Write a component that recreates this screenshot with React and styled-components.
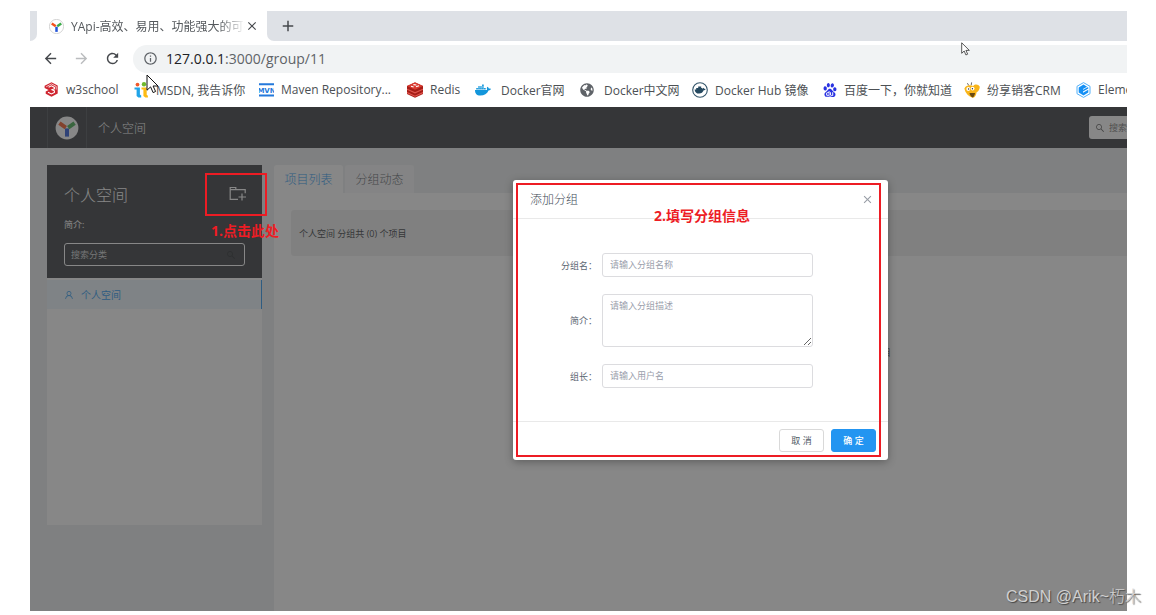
import React from 'react';
import styled, { createGlobalStyle } from 'styled-components';
import { FaDocker, FaGlobeAmericas } from 'react-icons/fa';
import { SiBaidu } from 'react-icons/si';
import { AiOutlineSearch, AiOutlineUser } from 'react-icons/ai';
import { MdArrowBack, MdArrowForward, MdRefresh, MdInfoOutline, MdClose, MdAdd } from 'react-icons/md';

const GlobalStyle = createGlobalStyle`
  * {
    box-sizing: border-box;
  }

  body {
    margin: 0;
    background: #fff;
    font-family: 'Open Sans', 'Noto Sans', 'Noto Sans CJK SC', sans-serif;
    font-size: 12px;
  }

  button,
  input,
  textarea {
    font-family: inherit;
  }
`;

const Screen = styled.div`
  position: relative;
  display: flex;
  min-height: 100vh;
  padding: 11px 29px 4px 30px;
`;

const Browser = styled.div`
  position: relative;
  display: flex;
  flex: 1;
  flex-direction: column;
  min-width: 0;
  overflow: hidden;
`;

/* ---------- browser chrome ---------- */

const TabStrip = styled.div`
  display: flex;
  flex: none;
  height: 30px;
`;

const PreviousTab = styled.div`
  width: 7px;
  background: #dee1e6;
  border-bottom-right-radius: 7px;
`;

const BrowserTab = styled.div`
  display: flex;
  align-items: center;
  width: 230px;
  padding: 0 8px 0 12px;
  color: #55595d;
`;

const TabTitle = styled.span`
  flex: 1;
  margin-left: 7px;
  overflow: hidden;
  white-space: nowrap;
  mask-image: linear-gradient(to right, #000 85%, transparent);
`;

const StripRest = styled.div`
  display: flex;
  flex: 1;
  align-items: center;
  padding-left: 12px;
  background: #dee1e6;
  border-bottom-left-radius: 7px;
`;

const ChromeButton = styled.button`
  display: flex;
  padding: 0;
  color: ${props => (props.$muted ? '#babcbe' : '#45484c')};
  background: none;
  border: 0;
`;

const Toolbar = styled.div`
  display: flex;
  flex: none;
  gap: 14px;
  align-items: center;
  height: 35px;
  padding-left: 12px;
`;

const AddressBar = styled.div`
  display: flex;
  flex: 1;
  gap: 8px;
  align-items: center;
  height: 28px;
  margin-left: -2px;
  padding-left: 10px;
  color: #5f6368;
  background: #f1f3f4;
  border-radius: 14px 0 0 14px;
`;

const Address = styled.span`
  font-size: 14px;

  b {
    color: #202124;
    font-weight: 400;
  }
`;

const Bookmarks = styled.nav`
  display: grid;
  flex: none;
  grid-template-columns: 90px 125px 148px 68px 105px 112px 131px 141px 112px 80px;
  align-items: center;
  height: 31px;
  padding: 0 0 4px 14px;
`;

const Bookmark = styled.a`
  display: flex;
  gap: ${props => (props.$wide ? 10 : 7)}px;
  align-items: center;
  color: #4c5054;
  text-decoration: none;
  white-space: nowrap;

  svg {
    flex: none;
  }
`;

/* ---------- page ---------- */

const Page = styled.div`
  position: relative;
  display: flex;
  flex: 1;
  flex-direction: column;
  background: #eceef1;
`;

const Header = styled.header`
  display: flex;
  align-items: center;
  height: 41px;
  padding-left: 17px;
  color: #fff;
  background: #32363a;
`;

const LogoLink = styled.a`
  display: flex;
  align-items: center;
  justify-content: center;
  width: 40px;
  height: 41px;
  border: solid #484c50;
  border-width: 0 1px;
`;

const Crumb = styled.span`
  flex: 1;
  margin-left: 11px;
  font-weight: 300;
`;

const HeaderSearch = styled.label`
  display: flex;
  gap: 4px;
  align-items: center;
  width: 38px;
  height: 23px;
  padding-left: 6px;
  overflow: hidden;
  color: #555;
  background: #fff;
  border-radius: 3px 0 0 3px;

  svg {
    flex: none;
  }

  input {
    width: 120px;
    padding: 0;
    font-size: 9px;
    background: none;
    border: 0;
  }
`;

const Main = styled.main`
  display: flex;
  flex: 1;
  gap: 12px;
  align-items: flex-start;
  padding: 17px 0 0 17px;
`;

const Sider = styled.aside`
  width: 215px;
  min-height: 360px;
  background: #fff;
`;

const GroupInfo = styled.section`
  height: 113px;
  padding: 17px 15px 17px 17px;
  color: #fff;
  background: #32363a;
`;

const GroupHeading = styled.div`
  display: flex;
  align-items: center;
  justify-content: space-between;
  height: 24px;

  h1 {
    margin: 0;
    font-size: 16px;
    font-weight: 300;
  }
`;

const AddGroup = styled.button`
  display: flex;
  padding: 0;
  color: #fff;
  background: none;
  border: 0;
`;

const GroupDesc = styled.p`
  margin: 12px 0;
  font-size: 9px;
  line-height: 13px;
`;

const GroupSearch = styled.label`
  display: flex;
  align-items: center;
  width: 181px;
  height: 23px;
  padding: 0 8px 0 6px;
  border: 1px solid #fff;
  border-radius: 3px;

  input {
    flex: 1;
    min-width: 0;
    padding: 0;
    font-size: 9px;
    background: none;
    border: 0;
  }

  input::placeholder {
    color: #d0d2d4;
  }

  svg {
    color: #1f2225;
  }
`;

const GroupItem = styled.a`
  display: flex;
  gap: 7px;
  align-items: center;
  height: 29px;
  margin-top: 2px;
  padding-left: 17px;
  color: #2395f1;
  font-size: 10px;
  text-decoration: none;
  background: #ebf5fc;
  border-right: 1px solid #2395f1;
`;

const Content = styled.section`
  display: flex;
  flex: 1;
  flex-direction: column;
  align-self: stretch;
`;

const Tabs = styled.div`
  display: flex;
  gap: 2px;
`;

const Tab = styled.button`
  width: 69px;
  height: 28px;
  padding: 0;
  color: ${props => (props.$active ? '#2395f1' : '#5a6067')};
  font-size: 12px;
  font-weight: 300;
  background: ${props => (props.$active ? '#fff' : '#f7f8f9')};
  border: 0;
  border-radius: 3px 3px 0 0;
`;

const Panel = styled.div`
  flex: 1;
  padding: 17px 0 0 17px;
  background: #fff;
`;

const Summary = styled.div`
  height: 46px;
  padding-left: 8px;
  color: #32363a;
  font-size: 9px;
  line-height: 48px;
  background: #eee;
  border-radius: 3px 0 0 3px;
`;

const EmptyHint = styled.p`
  width: 600px;
  margin: 90px 0 0;
  color: #5a6067;
  font-size: 9px;
  line-height: 14px;
  text-align: right;
`;

/* ---------- dialog ---------- */

const Mask = styled.div`
  position: absolute;
  inset: 0;
  background: rgba(55, 55, 55, 0.6);
`;

const Dialog = styled.form`
  position: absolute;
  top: 73px;
  left: 483px;
  width: 375px;
  background: #fff;
  border-radius: 3px;
  box-shadow: 0 2px 8px rgba(0, 0, 0, 0.3);
`;

const DialogHeader = styled.div`
  display: flex;
  align-items: center;
  justify-content: space-between;
  height: 39px;
  padding: 0 14px 0 17px;
  border-bottom: 1px solid #e9e9e9;

  h2 {
    margin: 0;
    color: #3e4a56;
    font-size: 12px;
    font-weight: 300;
  }
`;

const CloseButton = styled.button`
  display: flex;
  padding: 0;
  color: #989da6;
  background: none;
  border: 0;
`;

const DialogBody = styled.div`
  display: grid;
  gap: 17px;
  height: 202px;
  padding-top: 34px;
  align-content: start;
`;

const Field = styled.div`
  display: grid;
  grid-template-columns: 84px 211px;
  gap: 5px;
  align-items: center;

  label {
    color: #5b6672;
    font-size: 9px;
    text-align: right;
  }

  input,
  textarea {
    display: block;
    width: 100%;
    height: 24px;
    padding: 0 7px 1px;
    color: #4e5a66;
    font-size: 9px;
    background: #fff;
    border: 1px solid #dcdcdf;
    border-radius: 3px;
  }

  textarea {
    height: 53px;
    padding-top: 4px;
  }

  ::placeholder {
    color: #9a9eac;
  }
`;

const DialogFooter = styled.div`
  display: flex;
  gap: 7px;
  justify-content: flex-end;
  padding: 7px 12px 8px;
  border-top: 1px solid #e9e9e9;
`;

const Button = styled.button`
  width: 45px;
  height: 23px;
  padding: 0;
  color: ${props => (props.$primary ? '#fff' : '#4e5a66')};
  font-size: 9px;
  font-weight: ${props => (props.$primary ? 500 : 400)};
  background: ${props => (props.$primary ? '#2395f1' : '#fff')};
  border: 1px solid ${props => (props.$primary ? '#2395f1' : '#d9d9d9')};
  border-radius: 3px;
`;

/* ---------- tutorial marks over the page ---------- */

const MarkBox = styled.div`
  position: absolute;
  top: ${props => props.$top}px;
  left: ${props => props.$left}px;
  width: ${props => props.$width}px;
  height: ${props => props.$height}px;
  border: 2px solid #ed1c24;
  pointer-events: none;
`;

const MarkText = styled.strong`
  position: absolute;
  top: ${props => props.$top}px;
  left: ${props => props.$left}px;
  color: #ed1c24;
  font-size: 14px;
  line-height: 20px;
  white-space: nowrap;
`;

const Pointer = styled.svg`
  position: absolute;
  top: ${props => props.$top}px;
  left: ${props => props.$left}px;
`;

const Watermark = styled.div`
  position: absolute;
  right: 15px;
  bottom: 6px;
  color: #d0d0d0;
  font-family: 'Liberation Sans', 'Noto Sans CJK SC', sans-serif;
  font-size: 16px;
  font-weight: 300;
  line-height: 24px;
  text-shadow: 1px 1px 1px #444;
`;

/* ---------- drawings ---------- */

const YapiLogo = ({ size, ring = 'none' }) => (
  <svg width={size} height={size} viewBox="0 0 24 24">
    <circle cx="12" cy="12" r="11.4" fill="#fff" stroke={ring} />
    <g strokeWidth="4">
      <path d="M12 12.4v8.2" stroke="#2354d8" />
      <path d="M10.8 11.6L4.4 7.2" stroke="#f4511e" />
      <path d="M13.2 11.6l6.4-4.4" stroke="#3dab4a" />
    </g>
  </svg>
);

const W3Icon = () => (
  <svg width="15" height="15" viewBox="0 0 15 15">
    <path d="M7.5 0.3l6.2 3.3v7.8l-6.2 3.3-5.8-3V9.4L4.6 8 .6 6V3.8z" fill="#cf2630" />
    <path d="M2.2 4.8l5.2-2.9 4.8 2.5v3.2" fill="none" stroke="#fff" strokeWidth=".7" />
    <path d="M4.6 5.2l2.8-1.4 3 1.6v1.4L8 7.8l2.4 1v1.6L7.4 12 4 10.3" fill="none" stroke="#fff" strokeWidth="1.1" />
  </svg>
);

const MsdnIcon = () => (
  <svg width="15" height="16" viewBox="0 0 15 16">
    <circle cx="3.5" cy="2.6" r="1.9" fill="#f0592b" />
    <circle cx="10" cy="2.2" r="2.2" fill="#6fb92c" />
    <path d="M0.5 5.4h5.4v7l1.3 1.2v1.9H4.4L2.6 14V7.6H0.5z" fill="#20a4e8" />
    <path d="M7.5 5.4h5.2v7.4l1.2 1v1.7h-2.6L9.4 14V7.6H7.5z" fill="#fdbb13" />
  </svg>
);

const MvnIcon = () => (
  <svg width="15" height="14" viewBox="0 0 15 14">
    <path d="M0 1.2h15M0 12.6h15" stroke="#2479db" strokeWidth="2" />
    <text x="7.5" y="9.8" textAnchor="middle" fontFamily="DejaVu Sans" fontSize="7" fontWeight="700" fill="#2479db">
      MVN
    </text>
  </svg>
);

const RedisIcon = () => (
  <svg width="16" height="16" viewBox="0 0 16 16">
    <path d="M0 4l8-3.6L16 4v8l-8 3.8L0 12z" fill="#a61d17" />
    <path d="M0 4l8-3.7L16 4 8 7.7z" fill="#d93a30" />
    <path d="M0 7.2l8 3.6 8-3.6M0 10.6l8 3.6 8-3.6" fill="none" stroke="#e0564e" strokeWidth="1.1" />
    <path d="M6.4 2.6l3 .4M4 4.2l2.6.8M9 4.8l3-1" stroke="#fff" strokeWidth="1.1" />
  </svg>
);

const DockerHubIcon = () => (
  <svg width="16" height="16" viewBox="0 0 16 16">
    <circle cx="8" cy="8" r="7.3" fill="#fff" stroke="#35566b" strokeWidth="1.1" />
    <path d="M2.6 7.4h1.6V6h2V4.6h3V6h1.2v1.3l1-1.5.9 1 1.3.1c-.4 1-1 1.4-1.9 1.4-.8 2-2.4 3.3-4.6 3.3-2.7 0-4.3-1.5-4.5-4.2z" fill="#25485f" />
  </svg>
);

const BeeIcon = () => (
  <svg width="16" height="16" viewBox="0 0 16 16">
    <path d="M3.4 1.2l1.4 2.4M7.6 .4l-.4 2.8" stroke="#686868" />
    <path d="M0.4 6.4c1.4-3 5.4-4 8.8-2.4 2.2-2.4 5.2-1.6 6.6.8-.2 3-1.4 4.6-3.2 5.4-.4 3-1.6 5-3.6 5.6C4.6 14.6 1.2 10.8.4 6.4z" fill="#f9b51a" />
    <path d="M5.5 11h5.6c-.5 2.5-1.3 3.9-2.5 4.5-1.6-.7-2.8-2.4-3.1-4.5z" fill="#6b4a12" />
    <circle cx="4.3" cy="7" r="1.9" fill="#fff" />
    <circle cx="8.6" cy="6.6" r="1.9" fill="#fff" />
    <circle cx="4.6" cy="7" r=".7" fill="#333" />
    <circle cx="8.4" cy="6.7" r=".7" fill="#333" />
  </svg>
);

const ElementIcon = () => (
  <svg width="15" height="16" viewBox="0 0 15 16">
    <path d="M7.5.6l6.5 3.7v7.4l-6.5 3.7L1 11.7V4.3z" fill="#fff" stroke="#53b0f8" />
    <path d="M7.5 2.6l4.8 2.8v1L7 9.4v1.4l5.3-3v2.8l-4.8 2.8-4.8-2.8V5.4z" fill="#1590f5" />
    <path d="M7 7.4l5-2.8" stroke="#fff" strokeWidth=".8" />
  </svg>
);

const FolderPlus = () => (
  <svg width="18" height="16" viewBox="0 0 18 16" fill="none" stroke="currentColor" strokeWidth="1.2">
    <path d="M9 13.4H1.2V1.5h5.6v2.2h9.4v3.5M1.2 3.7h5.6M13 7.5v7M9.5 11h7.5" />
  </svg>
);

const Arrow = ({ top, left, width, height }) => (
  <Pointer $top={top} $left={left} width={width} height={height} viewBox="0 0 13 20">
    <path d="M1 1v15.2l3.6-3.3 2.5 5.7 2.5-1.1-2.5-5.5H12z" fill="#fff" stroke="#111" />
  </Pointer>
);

const bookmarks = [
  { label: 'w3school', icon: <W3Icon /> },
  { label: 'MSDN, 我告诉你', icon: <MsdnIcon /> },
  { label: 'Maven Repository...', icon: <MvnIcon /> },
  { label: 'Redis', icon: <RedisIcon /> },
  { label: 'Docker官网', icon: <FaDocker size={16} color="#1296db" />, wide: true },
  { label: 'Docker中文网', icon: <FaGlobeAmericas size={14} color="#5f6368" />, wide: true },
  { label: 'Docker Hub 镜像', icon: <DockerHubIcon /> },
  { label: '百度一下，你就知道', icon: <SiBaidu size={14} color="#2932e1" /> },
  { label: '纷享销客CRM', icon: <BeeIcon /> },
  { label: 'Element', icon: <ElementIcon /> }
];

const BrowserChrome = () => (
  <>
    <TabStrip>
      <PreviousTab />
      <BrowserTab>
        <YapiLogo size={15} ring="#bbb" />
        <TabTitle>YApi-高效、易用、功能强大的可视化</TabTitle>
        <ChromeButton aria-label="Close tab">
          <MdClose size={14} />
        </ChromeButton>
      </BrowserTab>
      <StripRest>
        <ChromeButton aria-label="New tab">
          <MdAdd size={18} />
        </ChromeButton>
      </StripRest>
    </TabStrip>
    <Toolbar>
      <ChromeButton aria-label="Back">
        <MdArrowBack size={17} />
      </ChromeButton>
      <ChromeButton aria-label="Forward" $muted>
        <MdArrowForward size={17} />
      </ChromeButton>
      <ChromeButton aria-label="Reload">
        <MdRefresh size={17} />
      </ChromeButton>
      <AddressBar>
        <MdInfoOutline size={15} />
        <Address>
          <b>127.0.0.1</b>:3000/group/11
        </Address>
      </AddressBar>
    </Toolbar>
    <Bookmarks>
      {bookmarks.map(item => (
        <Bookmark href="#" key={item.label} $wide={item.wide}>
          {item.icon}
          {item.label}
        </Bookmark>
      ))}
    </Bookmarks>
  </>
);

const AddGroupDialog = () => (
  <Dialog onSubmit={e => e.preventDefault()}>
    <DialogHeader>
      <h2>添加分组</h2>
      <CloseButton type="button" aria-label="关闭">
        <MdClose size={13} />
      </CloseButton>
    </DialogHeader>
    <DialogBody>
      <Field>
        <label htmlFor="group-name">分组名：</label>
        <input id="group-name" placeholder="请输入分组名称" />
      </Field>
      <Field>
        <label htmlFor="group-desc">简介：</label>
        <textarea id="group-desc" placeholder="请输入分组描述" />
      </Field>
      <Field>
        <label htmlFor="group-owner">组长：</label>
        <input id="group-owner" placeholder="请输入用户名" />
      </Field>
    </DialogBody>
    <DialogFooter>
      <Button type="button">取 消</Button>
      <Button type="submit" $primary>
        确 定
      </Button>
    </DialogFooter>
  </Dialog>
);

export default function App() {
  return (
    <Screen>
      <GlobalStyle />
      <Browser>
        <BrowserChrome />
        <Page>
          <Header>
            <LogoLink href="#" aria-label="YApi">
              <YapiLogo size={24} />
            </LogoLink>
            <Crumb>个人空间</Crumb>
            <HeaderSearch>
              <AiOutlineSearch size={10} />
              <input placeholder="搜索分组/项目/接口" aria-label="搜索" />
            </HeaderSearch>
          </Header>
          <Main>
            <Sider>
              <GroupInfo>
                <GroupHeading>
                  <h1>个人空间</h1>
                  <AddGroup aria-label="添加分组">
                    <FolderPlus />
                  </AddGroup>
                </GroupHeading>
                <GroupDesc>简介:</GroupDesc>
                <GroupSearch>
                  <input placeholder="搜索分类" aria-label="搜索分类" />
                  <AiOutlineSearch size={10} />
                </GroupSearch>
              </GroupInfo>
              <GroupItem href="#">
                <AiOutlineUser size={10} />
                个人空间
              </GroupItem>
            </Sider>
            <Content>
              <Tabs>
                <Tab $active>项目列表</Tab>
                <Tab>分组动态</Tab>
              </Tabs>
              <Panel>
                <Summary>个人空间 分组共 (0) 个项目</Summary>
                <EmptyHint>该分组还没有项目</EmptyHint>
              </Panel>
            </Content>
          </Main>
          <Mask />
          <AddGroupDialog />
          <MarkBox $top={66} $left={175} $width={62} $height={43} />
          <MarkText $top={114} $left={181}>1.点击此处</MarkText>
          <MarkBox $top={76} $left={486} $width={365} $height={274} />
          <MarkText $top={99} $left={624}>2.填写分组信息</MarkText>
        </Page>
        <Arrow top={63} left={116} width={13} height={20} />
        <Arrow top={31} left={931} width={9} height={14} />
      </Browser>
      <Watermark>CSDN @Arik~朽木</Watermark>
    </Screen>
  );
}
